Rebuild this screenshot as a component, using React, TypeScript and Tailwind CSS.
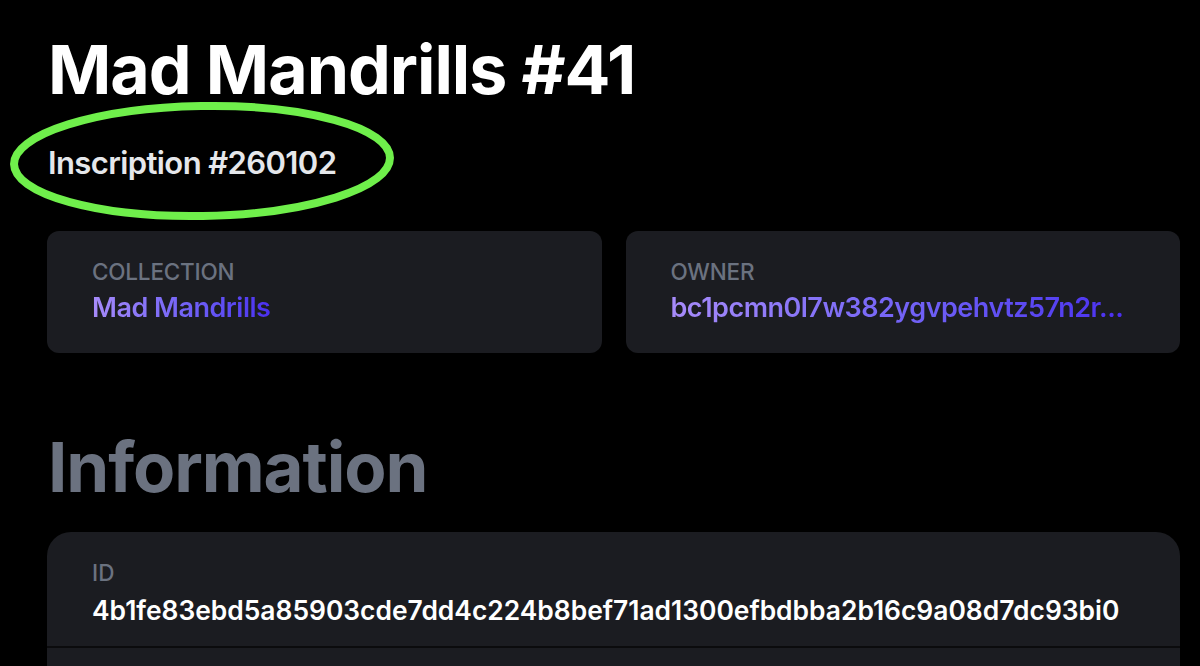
import React from "react";

const font = { fontFamily: "Inter, 'Noto Sans', sans-serif" };

function Field({ label, value }: { label: string; value: string }) {
  return (
    <div className="flex flex-col min-w-0">
      <div className="text-[22.5px] leading-none font-medium uppercase text-[#6b7280] tracking-[-0.2px]">{label}</div>
      <div className="mt-[8px] min-w-0">
        <span className="inline-block whitespace-nowrap text-[27px] leading-[32px] font-semibold bg-gradient-to-r from-[#a78bfa] to-[#4b2ef0] bg-clip-text text-transparent tracking-[-0.5px]">
          {value}
        </span>
      </div>
    </div>
  );
}

export default function App() {
  return (
    <div className="w-[1200px] h-[666px] bg-black overflow-hidden" style={font}>
      <div className="pl-[47px] pr-[20px] pt-[35px]">
        <h1 className="pl-[1px] text-[68px] leading-none font-bold text-white tracking-[-1px]">Mad Mandrills #41</h1>
        <div className="relative mt-[44px] ml-[1px] w-fit">
          <div className="text-[31px] leading-none font-semibold text-[#e5e7eb] tracking-[-0.6px]">Inscription #260102</div>
          <svg
            className="absolute left-[-41px] top-[-47px] pointer-events-none"
            width="392"
            height="128"
            viewBox="0 0 392 128"
          >
            <ellipse cx="195" cy="61" rx="188" ry="55" fill="none" stroke="#6fef4b" strokeWidth="8" transform="rotate(-1 195 61)" />
          </svg>
        </div>
        <div className="mt-[53px] grid grid-cols-2 gap-[24px]">
          <div className="h-[122px] rounded-[12px] bg-[#1b1c21] pl-[45px] pr-[40px] pt-[30px]">
            <Field label="Collection" value="Mad Mandrills" />
          </div>
          <div className="h-[122px] rounded-[12px] bg-[#1b1c21] pl-[45px] pr-[40px] pt-[30px]">
            <Field label="Owner" value="bc1pcmn0l7w382ygvpehvtz57n2r..." />
          </div>
        </div>
        <h2 className="mt-[80px] pl-[1px] text-[69px] leading-none font-bold text-[#6b7280] tracking-[-1.1px]">Information</h2>
        <div className="mt-[30px] rounded-[24px] bg-[#1b1c21] overflow-hidden">
          <div className="pl-[45px] pr-[40px] pt-[30px] h-[114px]">
            <div className="text-[22.5px] leading-none font-medium uppercase text-[#6b7280]">ID</div>
            <div className="mt-[9px] whitespace-nowrap text-[26.4px] leading-[32px] font-semibold text-white">
              4b1fe83ebd5a85903cde7dd4c224b8bef71ad1300efbdbba2b16c9a08d7dc93bi0
            </div>
          </div>
          <div className="h-[2px] bg-[#0b0b0d]" />
          <div className="h-[60px]" />
        </div>
      </div>
    </div>
  );
}
